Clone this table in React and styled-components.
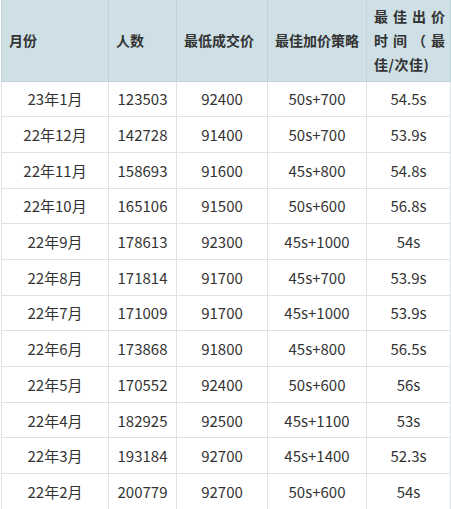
import React from "react";
import styled, { createGlobalStyle } from "styled-components";

const rows = [
  ["23年1月", "123503", "92400", "50s+700", "54.5s"],
  ["22年12月", "142728", "91400", "50s+700", "53.9s"],
  ["22年11月", "158693", "91600", "45s+800", "54.8s"],
  ["22年10月", "165106", "91500", "50s+600", "56.8s"],
  ["22年9月", "178613", "92300", "45s+1000", "54s"],
  ["22年8月", "171814", "91700", "45s+700", "53.9s"],
  ["22年7月", "171009", "91700", "45s+1000", "53.9s"],
  ["22年6月", "173868", "91800", "45s+800", "56.5s"],
  ["22年5月", "170552", "92400", "50s+600", "56s"],
  ["22年4月", "182925", "92500", "45s+1100", "53s"],
  ["22年3月", "193184", "92700", "45s+1400", "52.3s"],
  ["22年2月", "200779", "92700", "50s+600", "54s"],
];

const widths = [107, 68, 91, 99, 84];

const App = () => {
  return (
    <Wrapper>
      <GlobalStyle />
      <Table>
        <colgroup>
          {widths.map((w, i) => (
            <col key={i} style={{ width: w }} />
          ))}
        </colgroup>
        <thead>
          <tr>
            <HeadCell>月份</HeadCell>
            <HeadCell>人数</HeadCell>
            <HeadCell>最低成交价</HeadCell>
            <HeadCell>最佳加价策略</HeadCell>
            <HeadCell>
              <Line spread>最佳出价</Line>
              <Line spread>时间（最</Line>
              <Line>佳/次佳)</Line>
            </HeadCell>
          </tr>
        </thead>
        <tbody>
          {rows.map((row) => (
            <Row key={row[0]}>
              {row.map((cell, i) => (
                <Cell key={i}>{cell}</Cell>
              ))}
            </Row>
          ))}
        </tbody>
      </Table>
    </Wrapper>
  );
};

const GlobalStyle = createGlobalStyle`
  html, body {
    margin: 0;
    padding: 0;
    background: #ffffff;
  }
  body {
    font-family: "Noto Sans CJK SC", "Noto Sans", sans-serif;
    color: #333333;
  }
`;

const Wrapper = styled.div`
  width: 451px;
  height: 509px;
  overflow: hidden;
  padding-left: 1px;
  box-sizing: border-box;
`;

const Table = styled.table`
  border-collapse: collapse;
  table-layout: fixed;
  width: 449px;
`;

const HeadCell = styled.th`
  height: 81px;
  box-sizing: border-box;
  background: #cee0e5;
  border: 1px solid #bfd3d9;
  border-top: none;
  padding: 0 5px 0 7px;
  font-size: 14px;
  font-weight: 700;
  line-height: 24px;
  color: #333333;
  vertical-align: middle;
  white-space: nowrap;
  text-align: left;
`;

const Line = styled.span`
  display: block;
  text-align: ${(p) => (p.spread ? "justify" : "left")};
  text-align-last: ${(p) => (p.spread ? "justify" : "left")};
  text-justify: inter-character;
  white-space: normal;
  letter-spacing: ${(p) => (p.spread ? "0" : "0.5px")};
`;

const Row = styled.tr`
  height: 35.7px;
  background: #ffffff;
`;

const Cell = styled.td`
  border: 1px solid #dde3e5;
  padding: 0;
  font-size: 15px;
  text-align: center;
  vertical-align: middle;
  color: #333333;
  white-space: nowrap;
`;

export default App;
